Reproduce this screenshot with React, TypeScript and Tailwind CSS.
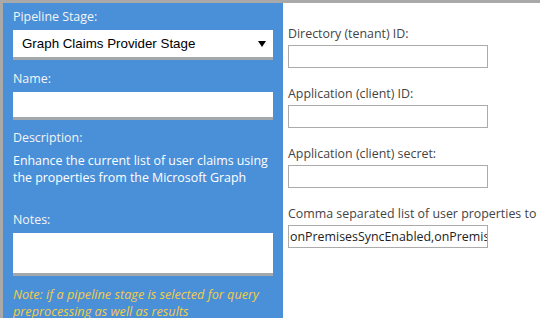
const font = { fontFamily: '"Open Sans", "Segoe UI", sans-serif' };

const RightField = ({ label, value }: { label: string; value?: string }) => (
  <div className="mb-[17px]">
    <div className="h-[17px] leading-[17px] text-[12.4px] text-[#444] whitespace-nowrap">{label}</div>
    <div className="mt-[3px] w-[200px] h-[23px] border border-[#ababab] bg-white overflow-hidden">
      {value && (
        <div className="pl-[1px] leading-[21px] text-[12.4px] text-[#222] whitespace-nowrap">{value}</div>
      )}
    </div>
  </div>
);

export default function App() {
  return (
    <div
      className="w-[540px] h-[318px] overflow-hidden bg-white border-t-[3px] border-l-[3px] border-[#a9a9a9] flex"
      style={font}
    >
      {/* Left stage panel */}
      <div className="w-[280px] shrink-0 bg-[#4a90d9] px-[10px] pt-[5px] text-[12.4px] text-[#f4f4f4]">
        <div className="h-[18px] leading-[18px]">Pipeline Stage:</div>
        <div className="mt-[4px] h-[30px] bg-white border-b-[3px] border-[#a3a8ad] flex items-center justify-between pl-[9px] pr-[7px]">
          <span
            className="text-[13.33px] text-black"
            style={{ fontFamily: '"Liberation Sans", Arial, sans-serif' }}
          >
            Graph Claims Provider Stage
          </span>
          <svg width="8" height="6" viewBox="0 0 8 6">
            <polygon points="0,0 8,0 4,6" fill="#000" />
          </svg>
        </div>

        <div className="mt-[10px] h-[18px] leading-[18px]">Name:</div>
        <div className="mt-[4px] h-[28px] bg-white border-b-[3px] border-[#a3a8ad]" />

        <div className="mt-[9px] h-[18px] leading-[18px]">Description:</div>
        <div className="mt-[5px] leading-[17px] text-white">
          Enhance the current list of user claims using the properties from the Microsoft Graph
        </div>

        <div className="mt-[25px] h-[18px] leading-[18px]">Notes:</div>
        <div className="mt-[4px] h-[43px] bg-white border-b-[3px] border-[#a3a8ad]" />

        <div className="mt-[10px] leading-[17px] italic text-[12.7px] text-[#f2cd45]">
          Note: if a pipeline stage is selected for query preprocessing as well as results
        </div>
      </div>

      {/* Right settings column */}
      <div className="flex-1 pl-[5px] pt-[22px]">
        <RightField label="Directory (tenant) ID:" />
        <RightField label="Application (client) ID:" />
        <RightField label="Application (client) secret:" />
        <RightField
          label="Comma separated list of user properties to map"
          value="onPremisesSyncEnabled,onPremisesSecurityIdentifier"
        />
      </div>
    </div>
  );
}
